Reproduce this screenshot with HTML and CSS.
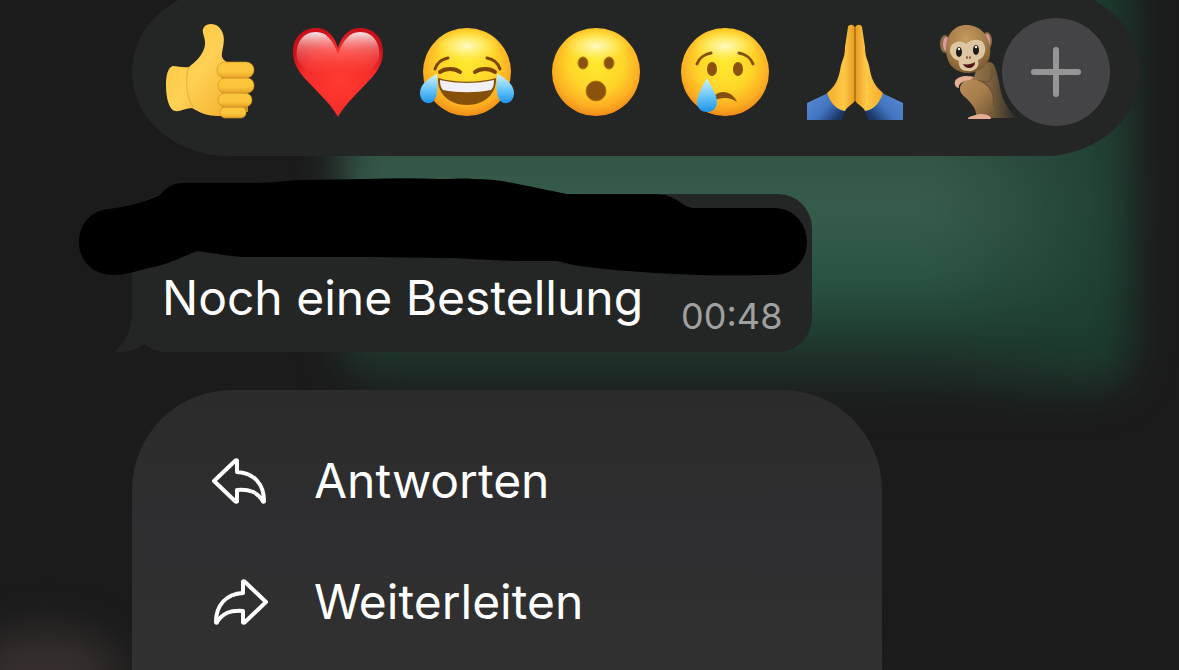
FILE: index.html
```html
<!DOCTYPE html>
<html lang="de">
<head>
    <meta charset="UTF-8">
    <meta name="viewport" content="width=device-width, initial-scale=1.0">
    <title>Nachricht</title>
    <link rel="stylesheet" href="styles.css">
</head>
<body>
    <!-- blurred chat behind the menu -->
    <div class="backdrop">
        <div class="blob blob-green"></div>
        <div class="blob blob-rose"></div>
    </div>

    <!-- shared gradients -->
    <svg class="defs" width="0" height="0" aria-hidden="true">
        <defs>
            <radialGradient id="face" cx="0.5" cy="0.4" r="0.62">
                <stop offset="0" stop-color="#ffe92e"/>
                <stop offset="0.5" stop-color="#ffd62a"/>
                <stop offset="0.8" stop-color="#fcae22"/>
                <stop offset="1" stop-color="#ee8517"/>
            </radialGradient>
            <radialGradient id="shine">
                <stop offset="0" stop-color="#fffbd0" stop-opacity="0.95"/>
                <stop offset="0.5" stop-color="#fff58a" stop-opacity="0.6"/>
                <stop offset="1" stop-color="#fff04a" stop-opacity="0"/>
            </radialGradient>
            <linearGradient id="tear" x1="0" y1="0" x2="0" y2="1">
                <stop offset="0" stop-color="#d8f4ff"/>
                <stop offset="0.5" stop-color="#6fc9fb"/>
                <stop offset="1" stop-color="#1d94ea"/>
            </linearGradient>
            <linearGradient id="skin" x1="0" y1="0" x2="1" y2="1">
                <stop offset="0" stop-color="#fbc437"/>
                <stop offset="0.5" stop-color="#ffd155"/>
                <stop offset="1" stop-color="#f3ae2a"/>
            </linearGradient>
            <linearGradient id="finger" x1="0" y1="0" x2="0" y2="1">
                <stop offset="0" stop-color="#fcc73c"/>
                <stop offset="0.6" stop-color="#fcc53a"/>
                <stop offset="1" stop-color="#e7a127"/>
            </linearGradient>
            <radialGradient id="heart" cx="0.52" cy="0.6" r="0.6">
                <stop offset="0" stop-color="#ff3a2e"/>
                <stop offset="0.65" stop-color="#f52c2a"/>
                <stop offset="1" stop-color="#c9101b"/>
            </radialGradient>
            <linearGradient id="heartShine" x1="0" y1="0" x2="0" y2="1">
                <stop offset="0" stop-color="#ffffff" stop-opacity="0.9"/>
                <stop offset="0.4" stop-color="#ff9a94" stop-opacity="0.5"/>
                <stop offset="1" stop-color="#ff4a40" stop-opacity="0"/>
            </linearGradient>
            <linearGradient id="palmLeft" x1="0" y1="0" x2="1" y2="0">
                <stop offset="0" stop-color="#f3ac2a"/>
                <stop offset="0.6" stop-color="#ffc947"/>
                <stop offset="1" stop-color="#e59a20"/>
            </linearGradient>
            <linearGradient id="palmRight" x1="1" y1="0" x2="0" y2="0">
                <stop offset="0" stop-color="#f3ac2a"/>
                <stop offset="0.6" stop-color="#ffc947"/>
                <stop offset="1" stop-color="#e59a20"/>
            </linearGradient>
            <linearGradient id="sleeveLeft" x1="0" y1="0" x2="1" y2="0.6">
                <stop offset="0" stop-color="#5a8cd6"/>
                <stop offset="0.6" stop-color="#4173c0"/>
                <stop offset="1" stop-color="#1b3564"/>
            </linearGradient>
            <linearGradient id="sleeveRight" x1="1" y1="0" x2="0" y2="0.6">
                <stop offset="0" stop-color="#5a8cd6"/>
                <stop offset="0.6" stop-color="#4173c0"/>
                <stop offset="1" stop-color="#1b3564"/>
            </linearGradient>
            <radialGradient id="fur" cx="0.45" cy="0.3" r="0.7">
                <stop offset="0" stop-color="#c79a60"/>
                <stop offset="0.6" stop-color="#a67c48"/>
                <stop offset="1" stop-color="#7c5930"/>
            </radialGradient>
            <linearGradient id="furBody" x1="0" y1="0" x2="1" y2="0">
                <stop offset="0" stop-color="#a88253"/>
                <stop offset="0.5" stop-color="#7f6340"/>
                <stop offset="1" stop-color="#242625"/>
            </linearGradient>
            <linearGradient id="furLeg" x1="0" y1="0" x2="1" y2="1">
                <stop offset="0" stop-color="#b98f5a"/>
                <stop offset="0.5" stop-color="#a57d4b"/>
                <stop offset="1" stop-color="#6e5233"/>
            </linearGradient>
        </defs>
    </svg>

    <main class="overlay">
        <div class="reactions">
            <div class="reaction-list">
                <button class="reaction" aria-label="Daumen hoch">
                    <svg viewBox="0 0 96 96">
                        <path fill="url(#skin)" d="M49 0C43 0 40 4 41 9C43 16 44 19 42 25C39 33 33 38 27 43C21 44 16 42 11 42C6 43 4 51 4 61C4 74 7 86 13 87C18 88 24 84 30 84C38 89 46 92 56 92L72 92L74 41L67 39C62 37 59 34 60 29C61 23 63 16 61 10C59 4 55 0 49 0Z"/>
                        <path fill="none" stroke="#e0a030" stroke-width="1.5" opacity="0.5" d="M27 43C23 52 24 73 31 83"/>
                        <path fill="#d08d22" d="M60 44H86V88H60Z"/>
                        <g fill="url(#finger)" stroke="#c98a24" stroke-width="0.6">
                            <rect x="58" y="83" width="26" height="11" rx="5"/>
                            <rect x="56" y="69" width="34" height="14" rx="7"/>
                            <rect x="56" y="54" width="36" height="15" rx="7"/>
                            <rect x="55" y="38" width="37" height="16" rx="8"/>
                        </g>
                    </svg>
                </button>
                <button class="reaction" aria-label="Herz">
                    <svg viewBox="0 0 96 96">
                        <path fill="url(#heart)" d="M47 93C43 85 34 75 22 63C9 50 2 41 2 28C2 13 12 4 25 4C36 4 43 11 47 24C51 11 58 4 69 4C82 4 92 13 92 28C92 41 85 50 72 63C60 75 51 85 47 93Z"/>
                        <path fill="url(#heartShine)" d="M6 34C4 19 12 8 25 8C36 8 42 17 47 30C52 17 58 8 69 8C82 8 90 19 88 34C84 46 70 52 47 52C24 52 10 46 6 34Z"/>
                    </svg>
                </button>
                <button class="reaction" aria-label="Freudentränen">
                    <svg viewBox="0 0 96 96">
                        <circle cx="47" cy="48" r="44" fill="url(#face)"/>
                        <ellipse cx="47" cy="22" rx="34" ry="17" fill="url(#shine)"/>
                        <g fill="none" stroke="#7b4508" stroke-width="3" stroke-linecap="round">
                            <path d="M15 45C17 39 22 35 28 34"/>
                            <path d="M67 34C73 35 78 39 80 45"/>
                            <path d="M20 48C25 44 35 44 40 48" stroke-width="4"/>
                            <path d="M55 48C60 44 70 44 75 48" stroke-width="4"/>
                        </g>
                        <path fill="#84500a" d="M18 54C36 59 58 59 76 54C77 70 64 81 47 81C30 81 17 70 18 54Z"/>
                        <path fill="#f1f0f4" d="M20 56C37 60 57 60 74 56C74 61 73 64 71 66C56 69 38 69 23 66C21 64 20 61 20 56Z"/>
                        <path fill="url(#tear)" d="M17 50C9 54 0 60 0 69C0 76 5 80 10 79C18 77 18 63 17 50Z"/>
                        <path fill="url(#tear)" d="M77 50C85 54 94 60 94 69C94 76 89 80 84 79C76 77 76 63 77 50Z"/>
                    </svg>
                </button>
                <button class="reaction" aria-label="Erstaunt">
                    <svg viewBox="0 0 96 96">
                        <circle cx="47" cy="48" r="44" fill="url(#face)"/>
                        <ellipse cx="47" cy="22" rx="34" ry="17" fill="url(#shine)"/>
                        <g fill="#8a520c" stroke="#b3730f" stroke-width="1">
                            <ellipse cx="34" cy="39" rx="5" ry="6"/>
                            <ellipse cx="60" cy="39" rx="5" ry="6"/>
                            <circle cx="47" cy="67" r="10"/>
                        </g>
                    </svg>
                </button>
                <button class="reaction" aria-label="Weinend">
                    <svg viewBox="0 0 96 96">
                        <circle cx="47" cy="48" r="44" fill="url(#face)"/>
                        <ellipse cx="47" cy="22" rx="34" ry="17" fill="url(#shine)"/>
                        <g fill="#8a520c">
                            <ellipse cx="34" cy="45" rx="5" ry="7"/>
                            <ellipse cx="60" cy="45" rx="5" ry="7"/>
                        </g>
                        <g fill="none" stroke="#83500d" stroke-width="3" stroke-linecap="round">
                            <path d="M19 40C21 34 27 30 33 29"/>
                            <path d="M61 29C67 30 73 34 75 40"/>
                        </g>
                        <path fill="#83500d" d="M37 71C44 65 55 68 59 78C52 73 45 73 37 76Z"/>
                        <path fill="url(#tear)" d="M29 54C34 64 39 71 39 78C39 84 35 88 29 88C23 88 19 84 19 78C19 71 24 64 29 54Z"/>
                    </svg>
                </button>
                <button class="reaction" aria-label="Gefaltete Hände">
                    <svg viewBox="0 0 96 96">
                        <path fill="url(#sleeveLeft)" d="M0 79L21 69C23 77 29 84 39 86L34 96H0Z"/>
                        <path fill="url(#sleeveRight)" d="M96 79L75 69C73 77 67 84 57 86L62 96H96Z"/>
                        <path fill="url(#palmLeft)" d="M48 4C47 0 42 0 41 3L38 23C38 29 37 33 35 38C33 44 33 49 31 54C29 60 25 65 20 69C23 78 29 86 38 87C40 82 46 81 48 76Z"/>
                        <path fill="url(#palmRight)" d="M48 4C49 0 54 0 55 3L58 23C58 29 59 33 61 38C63 44 63 49 65 54C67 60 71 65 76 69C73 78 67 86 58 87C56 82 50 81 48 76Z"/>
                        <path fill="none" stroke="#a8691a" stroke-width="1.4" d="M48 4V76"/>
                    </svg>
                </button>
                <button class="reaction" aria-label="Affe">
                    <svg viewBox="0 0 96 96">
                        <path fill="url(#furBody)" d="M40 47C46 38 55 35 58 41C63 52 63 62 66 72C70 82 76 91 82 94H52L36 76L24 66C24 60 30 54 38 53Z"/>
                        <path fill="url(#furLeg)" d="M24 65C24 58 32 54 40 56C51 59 58 68 58 79C58 87 55 93 52 94L40 92C41 86 36 80 30 74C26 71 24 68 24 65Z"/>
                        <path fill="none" stroke="#6f5233" stroke-width="1.2" d="M42 56C54 60 59 69 57 82M56 45C57 55 54 60 46 57"/>
                        <path fill="#e5ae94" d="M38 53C30 51 22 52 19 57C18 61 20 64 23 64C22 60 26 57 34 56Z"/>
                        <path fill="#e5ae94" d="M32 95C32 92 37 92 43 90C49 90 55 91 55 95Z"/>
                        <ellipse cx="9" cy="20" rx="5" ry="9" fill="#8c6c45"/>
                        <ellipse cx="10" cy="20" rx="3" ry="7" fill="#dd98a4"/>
                        <ellipse cx="51" cy="17" rx="5" ry="9" fill="#8c6c45"/>
                        <ellipse cx="51" cy="17" rx="3" ry="7" fill="#dd98a4"/>
                        <path fill="url(#fur)" d="M30 1C44 1 53 11 54 24C56 38 46 49 32 49C19 49 10 40 10 25C10 11 18 1 30 1Z"/>
                        <path fill="#dfc6a2" d="M15 22C18 17 26 16 30 20C35 15 45 14 48 20C51 27 48 34 42 36C44 43 39 48 31 47C25 47 22 42 23 37C16 35 12 28 15 22Z"/>
                        <ellipse cx="23" cy="28" rx="3" ry="5" fill="#1d1b1b"/>
                        <ellipse cx="40" cy="26" rx="3" ry="5" fill="#1d1b1b"/>
                        <circle cx="23" cy="25" r="1.2" fill="#fff"/>
                        <circle cx="40" cy="23" r="1.2" fill="#fff"/>
                        <path fill="none" stroke="#6b4022" stroke-width="1.6" stroke-linecap="round" d="M31 33L31 34M34 33L34 34"/>
                        <path fill="#541414" d="M27 40C31 41 36 40 39 38C39 42 36 44 33 44C30 44 28 42 27 40Z"/>
                    </svg>
                </button>
            </div>
            <button class="reaction-more" aria-label="Weitere Reaktionen">
                <svg viewBox="0 0 50 50">
                    <path fill="none" stroke="#989597" stroke-width="6" stroke-linecap="round" d="M25 3V47M3 25H47"/>
                </svg>
            </button>
        </div>

        <article class="bubble">
            <svg class="bubble-tail" viewBox="0 0 50 60" aria-hidden="true">
                <path d="M17 0C17 30 14 45 0 57C-1 59 1 59 3 59C13 59 22 56 30 50C36 56 42 59 50 59V0Z"/>
            </svg>
            <svg class="redaction" viewBox="0 0 728 98" aria-hidden="true">
                <path d="M0 64C0 46 12 33 29 31C47 29 64 25 81 17C88 9 94 5 104 5H181C196 5 208 2 224 2C246 2 266 1 288 1C312 0 337 0 361 1C375 1 385 0 394 1C408 1 420 2 434 5L488 16H574C582 16 588 17 594 20C602 24 606 29 614 30H696C714 30 728 45 728 64C728 83 714 97 696 97C662 97 628 98 594 96C560 94 526 92 494 87L478 83H444C416 83 389 80 361 80L291 79H164C148 78 133 75 118 73C103 79 90 86 74 89C61 92 47 97 34 97C15 97 0 84 0 64Z"/>
            </svg>
            <p class="bubble-text">Noch eine Bestellung</p>
            <time class="bubble-time" datetime="00:48">00:48</time>
        </article>

        <ul class="menu">
            <li>
                <button class="menu-item">
                    <svg class="menu-icon" viewBox="0 0 56 48" aria-hidden="true">
                        <path d="M2 24L23 4C24 3 25 3 25 4V15C42 16 52 27 52 44C52 45 51 45 51 44C45 35 38 32 25 33V44C25 45 24 45 23 44Z"/>
                    </svg>
                    <span>Antworten</span>
                </button>
            </li>
            <li>
                <button class="menu-item">
                    <svg class="menu-icon" viewBox="0 0 56 48" aria-hidden="true">
                        <path d="M54 24L33 4C32 3 31 3 31 4V15C14 16 4 27 4 44C4 45 5 45 5 44C11 35 18 32 31 33V44C31 45 32 45 33 44Z"/>
                    </svg>
                    <span>Weiterleiten</span>
                </button>
            </li>
        </ul>
    </main>
</body>
</html>
```

FILE: styles.css
```css
* {
    box-sizing: border-box;
}
body {
    margin: 0;
    height: 100vh;
    overflow: hidden;
    background-color: #1b1b1b;
    color: #fff;
    font-family: Inter, "Liberation Sans", sans-serif;
}
button {
    border: none;
    padding: 0;
    background: none;
    color: inherit;
    font: inherit;
    cursor: pointer;
}
.defs {
    position: absolute;
}
/* Hintergrund */
.backdrop {
    position: fixed;
    inset: 0;
    overflow: hidden;
    z-index: -1;
}
.blob {
    position: absolute;
    filter: blur(20px);
}
.blob-green {
    top: -40px;
    left: 29%;
    right: 4%;
    height: 430px;
    border-radius: 40px;
    background: linear-gradient(to right, rgba(28, 60, 47, 0) 75%, rgba(28, 60, 47, 0.8) 96%),
        linear-gradient(#1d3a30 20%, #335546 44%, #375d4c 58%, #2b5443 74%, #1f4434 84%, #1f332b 91%, #1d2522);
}
.blob-rose {
    left: -30px;
    bottom: -50px;
    width: 150px;
    height: 90px;
    border-radius: 50%;
    background-color: #372f2f;
}
.overlay {
    display: flex;
    flex-direction: column;
    align-items: flex-start;
    gap: 38px;
    height: 100%;
    padding: 0 39px 0 132px;
}
/* Reaktionen */
.reactions {
    position: relative;
    flex-shrink: 0;
    width: 100%;
    margin-top: -12px;
    padding: 36px 30px;
    border-radius: 96px / 84px;
    background-color: #242625;
}
.reaction-list {
    display: flex;
    gap: 33px;
    overflow: hidden;
}
.reaction {
    flex: none;
    width: 96px;
    height: 96px;
}
.reaction svg {
    display: block;
    width: 100%;
    height: 100%;
}
.reaction-more {
    position: absolute;
    top: 30px;
    right: 30px;
    display: flex;
    align-items: center;
    justify-content: center;
    width: 108px;
    height: 108px;
    border-radius: 50%;
    background-color: #444446;
}
.reaction-more svg {
    width: 50px;
    height: 50px;
}
/* Nachricht */
.bubble {
    position: relative;
    display: flex;
    flex-shrink: 0;
    align-items: flex-end;
    gap: 38px;
    padding: 74px 30px 14px;
    border-radius: 34px;
    background-color: #242625;
}
.bubble-tail {
    position: absolute;
    left: -16px;
    bottom: -1px;
    width: 50px;
    height: 60px;
    fill: #242625;
}
.redaction {
    position: absolute;
    top: -16px;
    left: -53px;
    width: 728px;
    height: 98px;
}
.bubble-text {
    margin: 0 0 10px;
    font-size: 48px;
    line-height: 60px;
}
.bubble-time {
    color: #a0a0a0;
    font-size: 36px;
    line-height: 44px;
}
/* Menü */
.menu {
    flex: 1 0 auto;
    width: 100%;
    max-width: 750px;
    margin: 0;
    padding: 30px 0;
    border-radius: 100px 100px 0 0;
    background: linear-gradient(#2b2b2b, #2e2e30 40%, #313132);
    list-style: none;
}
.menu-item {
    display: flex;
    align-items: center;
    gap: 46px;
    width: 100%;
    height: 121px;
    padding: 0 80px;
    font-size: 48px;
    text-align: left;
}
.menu-icon {
    width: 56px;
    height: 48px;
    fill: none;
    stroke: #fff;
    stroke-width: 4;
    stroke-linejoin: round;
}
```
